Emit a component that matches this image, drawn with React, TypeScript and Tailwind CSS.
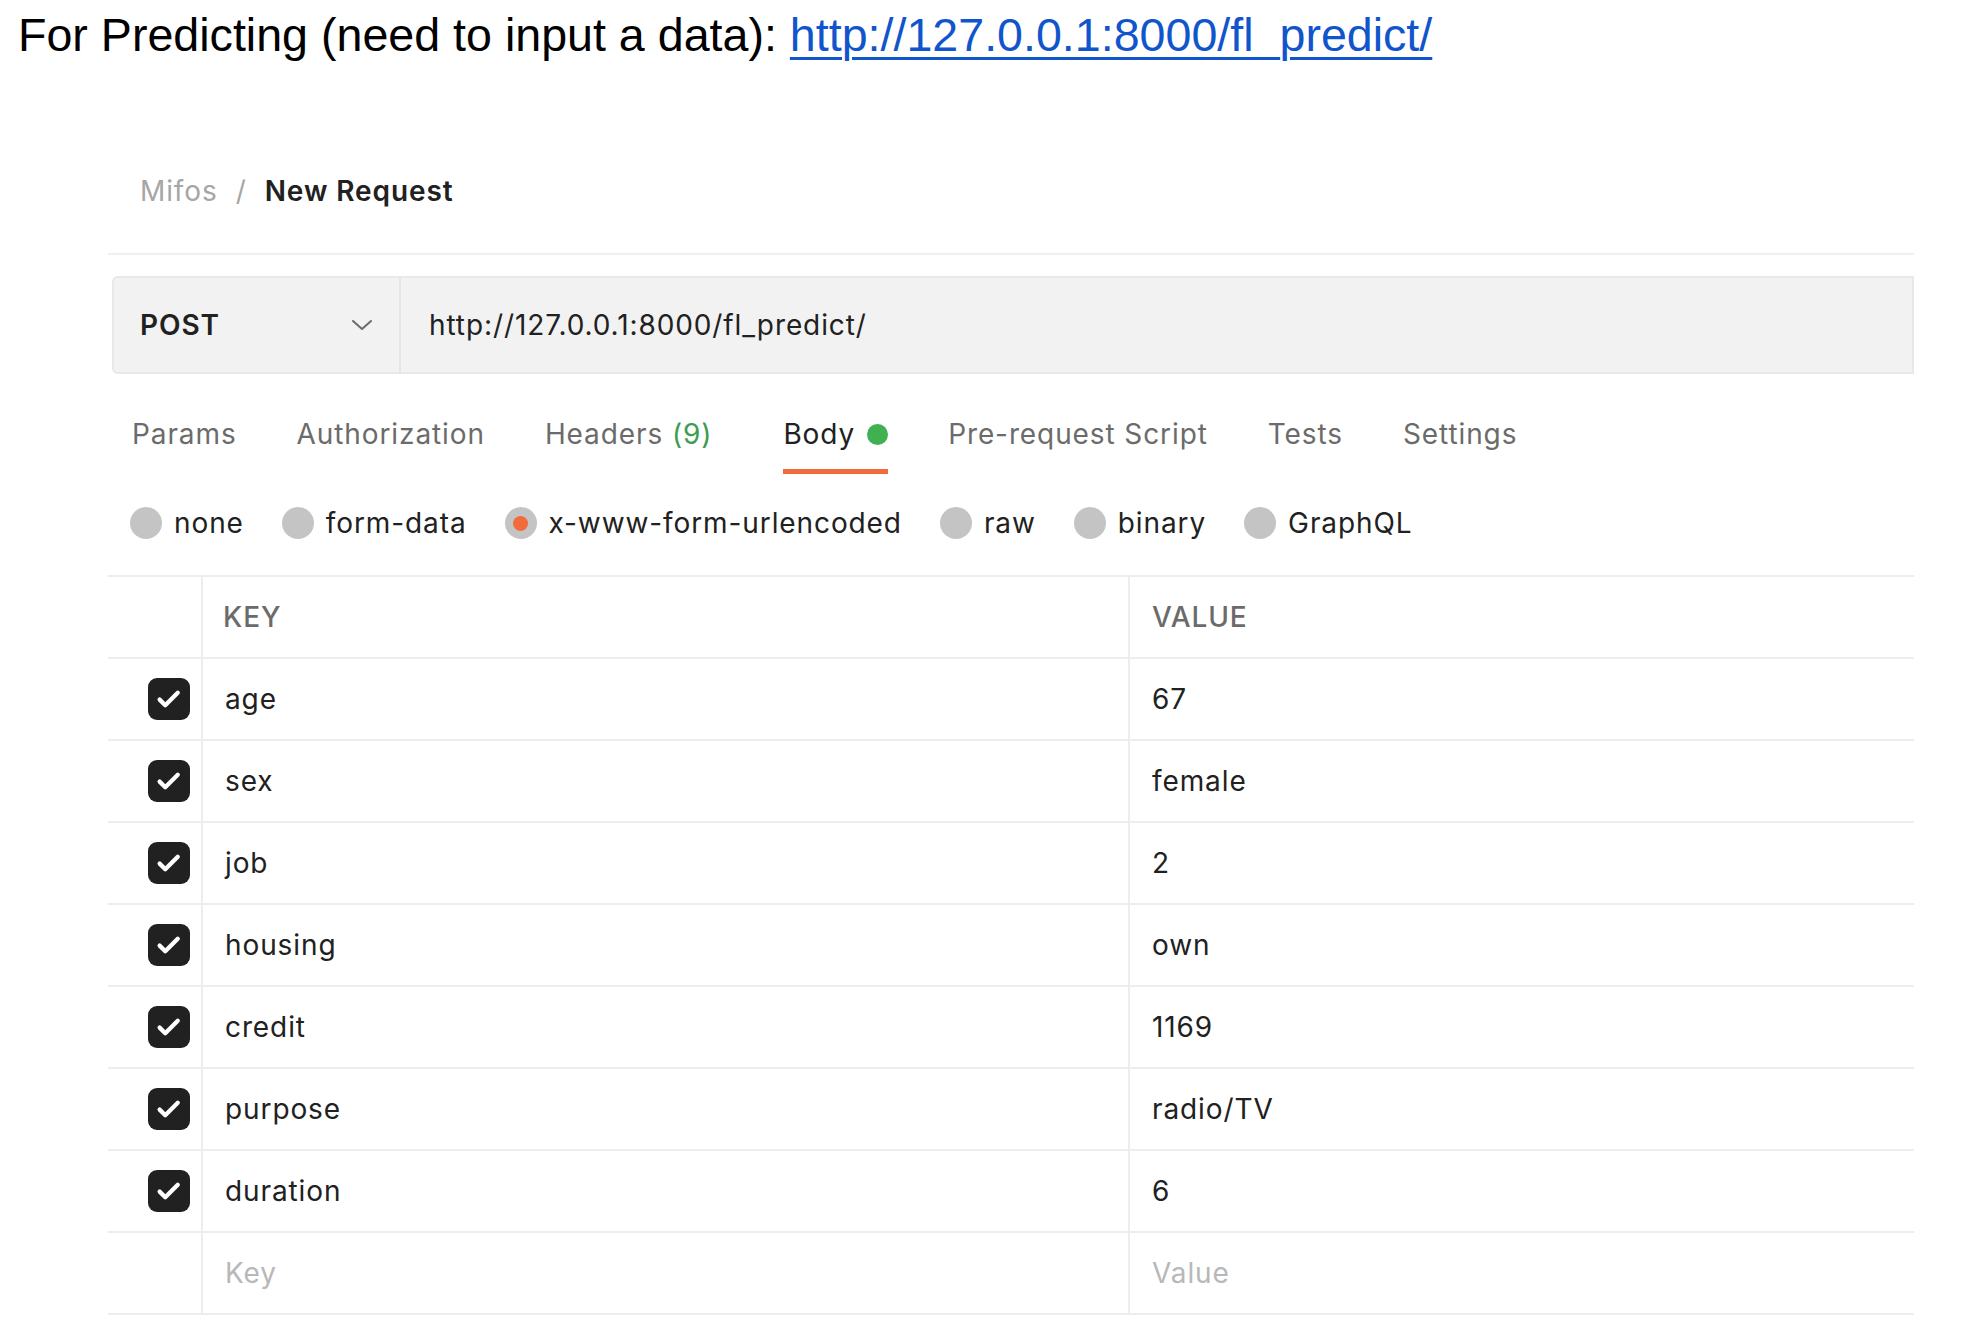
import React from 'react'

const rows = [
  { key: 'age', value: '67' },
  { key: 'sex', value: 'female' },
  { key: 'job', value: '2' },
  { key: 'housing', value: 'own' },
  { key: 'credit', value: '1169' },
  { key: 'purpose', value: 'radio/TV' },
  { key: 'duration', value: '6' },
]

const tabs = ['Params', 'Authorization', 'Headers', 'Body', 'Pre-request Script', 'Tests', 'Settings']
const bodyTypes = ['none', 'form-data', 'x-www-form-urlencoded', 'raw', 'binary', 'GraphQL']

const Check = () => (
  <div className='w-[42px] h-[42px] rounded-[9px] bg-[#212121] flex items-center justify-center'>
    <svg width='30' height='30' viewBox='0 0 24 24' fill='none'>
      <path d='M4.5 12.5l4.5 4.5 10-10' stroke='#ffffff' strokeWidth='3.4' strokeLinecap='round' strokeLinejoin='round' />
    </svg>
  </div>
)

const App = () => {
  return (
    <main className='bg-white w-[1978px] h-[1342px] overflow-hidden'>
      <p className='pl-[18px] pt-[6px] text-[46.6px] leading-[58px] text-black' style={{ fontFamily: '"Liberation Sans", Arial, sans-serif' }}>
        For Predicting (need to input a data):{' '}
        <a href='#' className='text-[#1155cc] underline decoration-[3px] underline-offset-[6px]'>
          http://127.0.0.1:8000/fl_predict/
        </a>
      </p>

      <div className='ml-[108px] w-[1806px] mt-[107px] text-[28px] tracking-[0.9px]' style={{ fontFamily: 'Inter, "Noto Sans", sans-serif' }}>
        {/* breadcrumb */}
        <div className='flex items-center pl-[32px] h-[40px]'>
          <span className='text-[#a6a6a6]'>Mifos</span>
          <span className='text-[#a6a6a6] mx-[18px]'>/</span>
          <span className='text-[#212121] font-semibold'>New Request</span>
        </div>

        <div className='mt-[42px] h-[2px] bg-[#f0f0f0]' />

        {/* url bar */}
        <div className='mt-[21px] ml-[4px] h-[98px] flex bg-[#f2f2f2] border-[2px] border-[#e8e8e8] rounded-l-[6px]'>
          <div className='w-[287px] flex items-center justify-between pl-[26px] pr-[26px] border-r-[2px] border-[#e6e6e6]'>
            <span className='font-semibold text-[#212121]'>POST</span>
            <svg width='22' height='12' viewBox='0 0 22 12' fill='none'>
              <path d='M2 2l9 8 9-8' stroke='#6b6b6b' strokeWidth='2' strokeLinecap='round' strokeLinejoin='round' />
            </svg>
          </div>
          <div className='flex items-center pl-[28px] text-[#212121]'>http://127.0.0.1:8000/fl_predict/</div>
        </div>

        {/* tabs */}
        <div className='flex gap-[60px] pl-[24px] mt-[40px] h-[40px]'>
          {tabs.map(t => (
            <div key={t} className={`relative flex items-center h-[40px] ${t === 'Body' ? 'ml-[11px]' : ''}`}>
              {t === 'Body' ? (
                <>
                  <span className='text-[#212121]'>Body</span>
                  <span className='ml-[12px] w-[21px] h-[21px] rounded-full bg-[#3fb153]' />
                  <span className='absolute left-0 right-0 top-[55px] h-[5px] bg-[#f26b3a]' />
                </>
              ) : t === 'Headers' ? (
                <span className='text-[#6b6b6b]'>Headers <span className='text-[#3c9c4f]'>(9)</span></span>
              ) : (
                <span className='text-[#6b6b6b]'>{t}</span>
              )}
            </div>
          ))}
        </div>

        {/* body types */}
        <div className='flex items-center gap-[38px] pl-[22px] mt-[49px] h-[40px]'>
          {bodyTypes.map(b => (
            <div key={b} className='flex items-center gap-[12px]'>
              <span className='w-[32px] h-[32px] rounded-full bg-[#c4c4c4] flex items-center justify-center'>
                {b === 'x-www-form-urlencoded' && <span className='w-[15px] h-[15px] rounded-full bg-[#f26b3a]' />}
              </span>
              <span className='text-[#212121]'>{b}</span>
            </div>
          ))}
        </div>

        {/* table */}
        <div className='mt-[32px] border-t-[2px] border-[#ededed]'>
          <div className='grid grid-cols-[95px_927px_1fr] h-[82px] border-b-[2px] border-[#ededed]'>
            <div className='border-r-[2px] border-[#ededed]' />
            <div className='flex items-center pl-[20px] border-r-[2px] border-[#ededed] text-[#6b6b6b] font-medium'>KEY</div>
            <div className='flex items-center pl-[22px] text-[#6b6b6b] font-medium'>VALUE</div>
          </div>
          {rows.map(r => (
            <div key={r.key} className='grid grid-cols-[95px_927px_1fr] h-[82px] border-b-[2px] border-[#ededed]'>
              <div className='flex items-center justify-center pl-[33px] pr-[4px] border-r-[2px] border-[#ededed]'>
                <Check />
              </div>
              <div className='flex items-center pl-[22px] border-r-[2px] border-[#ededed] text-[#212121]'>{r.key}</div>
              <div className='flex items-center pl-[22px] text-[#212121]'>{r.value}</div>
            </div>
          ))}
          <div className='grid grid-cols-[95px_927px_1fr] h-[82px] border-b-[2px] border-[#ededed]'>
            <div className='border-r-[2px] border-[#ededed]' />
            <div className='flex items-center pl-[22px] border-r-[2px] border-[#ededed] text-[#b8b8b8]'>Key</div>
            <div className='flex items-center pl-[22px] text-[#b8b8b8]'>Value</div>
          </div>
        </div>
      </div>
    </main>
  )
}

export default App
